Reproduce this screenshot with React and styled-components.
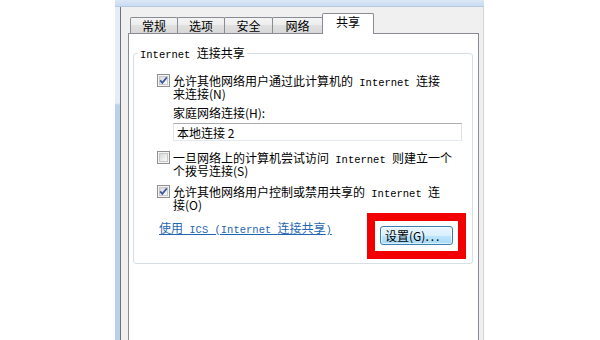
import React from 'react';
import styled, { createGlobalStyle } from 'styled-components';

const GlobalStyle = createGlobalStyle`
  html, body {
    margin: 0;
    padding: 0;
    background: #fff;
  }
  body {
    width: 600px;
    height: 340px;
    overflow: hidden;
    font-family: "Noto Sans CJK SC", "Liberation Sans", sans-serif;
    font-size: 12px;
    color: #000;
  }
`;

const Stage = styled.div`
  display: flex;
  width: 600px;
  height: 340px;
  padding-left: 115px;
  box-sizing: border-box;
`;

const Frame = styled.div`
  display: flex;
  flex-direction: column;
  width: 369px;
  height: 340px;
`;

const TitleStrip = styled.div`
  height: 6px;
  background: linear-gradient(#dbe8f6, #c9dcf1);
  border-bottom: 1px solid #b6c9df;
`;

const FrameRow = styled.div`
  display: flex;
  flex: 1;
`;

const FrameEdge = styled.div`
  width: 5px;
  background: linear-gradient(#e4edf8 0, #e4edf8 96px, #b9d1ea 98px, #b9d1ea 100%);
`;

const Body = styled.div`
  display: flex;
  flex-direction: column;
  width: 364px;
  box-sizing: border-box;
  padding: 6px 4px 0 7px;
  background: #f0f0f0;
  border-left: 1px solid #6f7377;
  border-right: 1px solid #d4d4d4;
`;

const TabRow = styled.div`
  display: flex;
  align-items: flex-end;
  height: 20px;
  padding-left: 2px;
`;

const Tab = styled.div`
  position: relative;
  z-index: ${p => (p.$active ? 2 : 1)};
  box-sizing: border-box;
  width: ${p => p.$w}px;
  height: ${p => (p.$active ? 21 : 16)}px;
  margin-left: ${p => (p.$first ? 0 : -1)}px;
  margin-bottom: ${p => (p.$active ? -1 : 0)}px;
  padding-bottom: ${p => (p.$active ? 4 : 0)}px;
  border: 1px solid #898c95;
  border-bottom: none;
  border-radius: 2px 2px 0 0;
  background: ${p =>
    p.$active ? '#fff' : 'linear-gradient(#f4f4f4, #ececec 50%, #e0e0e0 50%, #d8d8d8)'};
  text-align: center;
  line-height: ${p => (p.$active ? 16 : 15)}px;
`;

const Panel = styled.div`
  flex: 1;
  padding: 12px 5px 0 4px;
  background: #fff;
  border: 1px solid #898c95;
  border-bottom: none;
`;

const Group = styled.fieldset`
  margin: 0;
  padding: 0 0 0 4px;
  min-width: 0;
  border: 1px solid #d5dfe5;
  border-radius: 3px;
`;

const Legend = styled.legend`
  padding: 0 2px;
  line-height: 14px;
`;

const GroupBody = styled.div`
  display: flex;
  flex-direction: column;
  padding: 14px 10px 18px 19px;
`;

const En = styled.span`
  font-family: "Liberation Mono", monospace;
  font-size: 10.5px;
  line-height: 10px;
`;

const CheckRow = styled.div`
  display: flex;
  align-items: flex-start;
  gap: 3px;
  margin-top: ${p => p.$gap || 0}px;
`;

const Box = styled.span`
  position: relative;
  flex: none;
  width: 13px;
  height: 13px;
  box-sizing: border-box;
  border: 1px solid #8e8f8f;
  background: #f4f4f4;

  &::before {
    content: '';
    position: absolute;
    inset: 1px;
    border: 1px solid #c8c8c8;
    background: linear-gradient(135deg, #d8d8d8, #fbfbfb);
  }

  svg {
    position: absolute;
    left: -1px;
    top: -1px;
  }
`;

const LabelText = styled.div`
  line-height: 13px;
`;

const Line = styled.div`
  height: 13px;
  white-space: nowrap;
`;

const Indented = styled.div`
  display: flex;
  flex-direction: column;
  margin-left: 16px;
`;

const FieldLabel = styled.div`
  margin-top: 6px;
  line-height: 13px;
`;

const TextBox = styled.input`
  box-sizing: border-box;
  width: 100%;
  height: 18px;
  margin: 4px 0 0;
  padding: 0 3px;
  font: inherit;
  line-height: 16px;
  color: #000;
  background: #fff;
  border: 1px solid;
  border-color: #abadb3 #dbdfe6 #e3e9ef #e2e3ea;
  outline: none;
`;

const Footer = styled.div`
  display: flex;
  justify-content: space-between;
  align-items: flex-start;
  margin-top: 10px;
`;

const Link = styled.a`
  margin-left: 2px;
  height: 13px;
  line-height: 13px;
  color: #1f66b3;
  text-decoration: underline;
  white-space: nowrap;
  cursor: pointer;
`;

const Highlight = styled.span`
  position: relative;
  display: inline-flex;
  margin: 5px 9px 0 0;

  &::after {
    content: '';
    position: absolute;
    inset: -13px -13px -14px -13px;
    border: 8px solid #f20000;
    pointer-events: none;
  }
`;

const Button = styled.button`
  box-sizing: border-box;
  width: 73px;
  height: 19px;
  padding: 0 0 0 4px;
  font: inherit;
  line-height: 17px;
  text-align: left;
  color: #000;
  border: 1px solid #3c7fb1;
  border-radius: 3px;
  background: linear-gradient(#eaf6fd 0%, #d9f0fc 50%, #bee6fd 50%, #a7d9f5 100%);
  box-shadow: inset 0 0 0 1px rgba(255, 255, 255, 0.6);
`;

const Dots = styled.span`
  letter-spacing: 2px;
`;

const Check = ({ checked }) => (
  <Box>
    {checked && (
      <svg width="13" height="13" viewBox="0 0 13 13">
        <path d="M3.2 6.4 L5.3 8.9 L9.8 3.4" fill="none" stroke="#3b57a0" strokeWidth="1.7" />
      </svg>
    )}
  </Box>
);

const tabs = [
  { label: '常规', w: 48 },
  { label: '选项', w: 48 },
  { label: '安全', w: 49 },
  { label: '网络', w: 51 },
  { label: '共享', w: 52, active: true },
];

export default function App() {
  return (
    <>
      <GlobalStyle />
      <Stage>
        <Frame>
          <TitleStrip />
          <FrameRow>
            <FrameEdge />
            <Body>
              <TabRow>
                {tabs.map((t, i) => (
                  <Tab key={t.label} $w={t.w} $active={t.active} $first={i === 0}>
                    {t.label}
                  </Tab>
                ))}
              </TabRow>
              <Panel>
                <Group>
                  <Legend>
                    <En>Internet </En>连接共享
                  </Legend>
                  <GroupBody>
                    <CheckRow>
                      <Check checked />
                      <LabelText>
                        <Line>
                          允许其他网络用户通过此计算机的<En> Internet </En>连接
                        </Line>
                        <Line>来连接(N)</Line>
                      </LabelText>
                    </CheckRow>
                    <Indented>
                      <FieldLabel>家庭网络连接(H):</FieldLabel>
                      <TextBox readOnly value="本地连接 2" />
                    </Indented>
                    <CheckRow $gap={10}>
                      <Check />
                      <LabelText>
                        <Line>
                          一旦网络上的计算机尝试访问<En> Internet </En>则建立一个
                        </Line>
                        <Line>个拨号连接(S)</Line>
                      </LabelText>
                    </CheckRow>
                    <CheckRow $gap={8}>
                      <Check checked />
                      <LabelText>
                        <Line>
                          允许其他网络用户控制或禁用共享的<En> Internet </En>连
                        </Line>
                        <Line>接(O)</Line>
                      </LabelText>
                    </CheckRow>
                    <Footer>
                      <Link>
                        使用<En> ICS (Internet </En>连接共享<En>)</En>
                      </Link>
                      <Highlight>
                        <Button type="button">
                          设置(G)<Dots>...</Dots>
                        </Button>
                      </Highlight>
                    </Footer>
                  </GroupBody>
                </Group>
              </Panel>
            </Body>
          </FrameRow>
        </Frame>
      </Stage>
    </>
  );
}
